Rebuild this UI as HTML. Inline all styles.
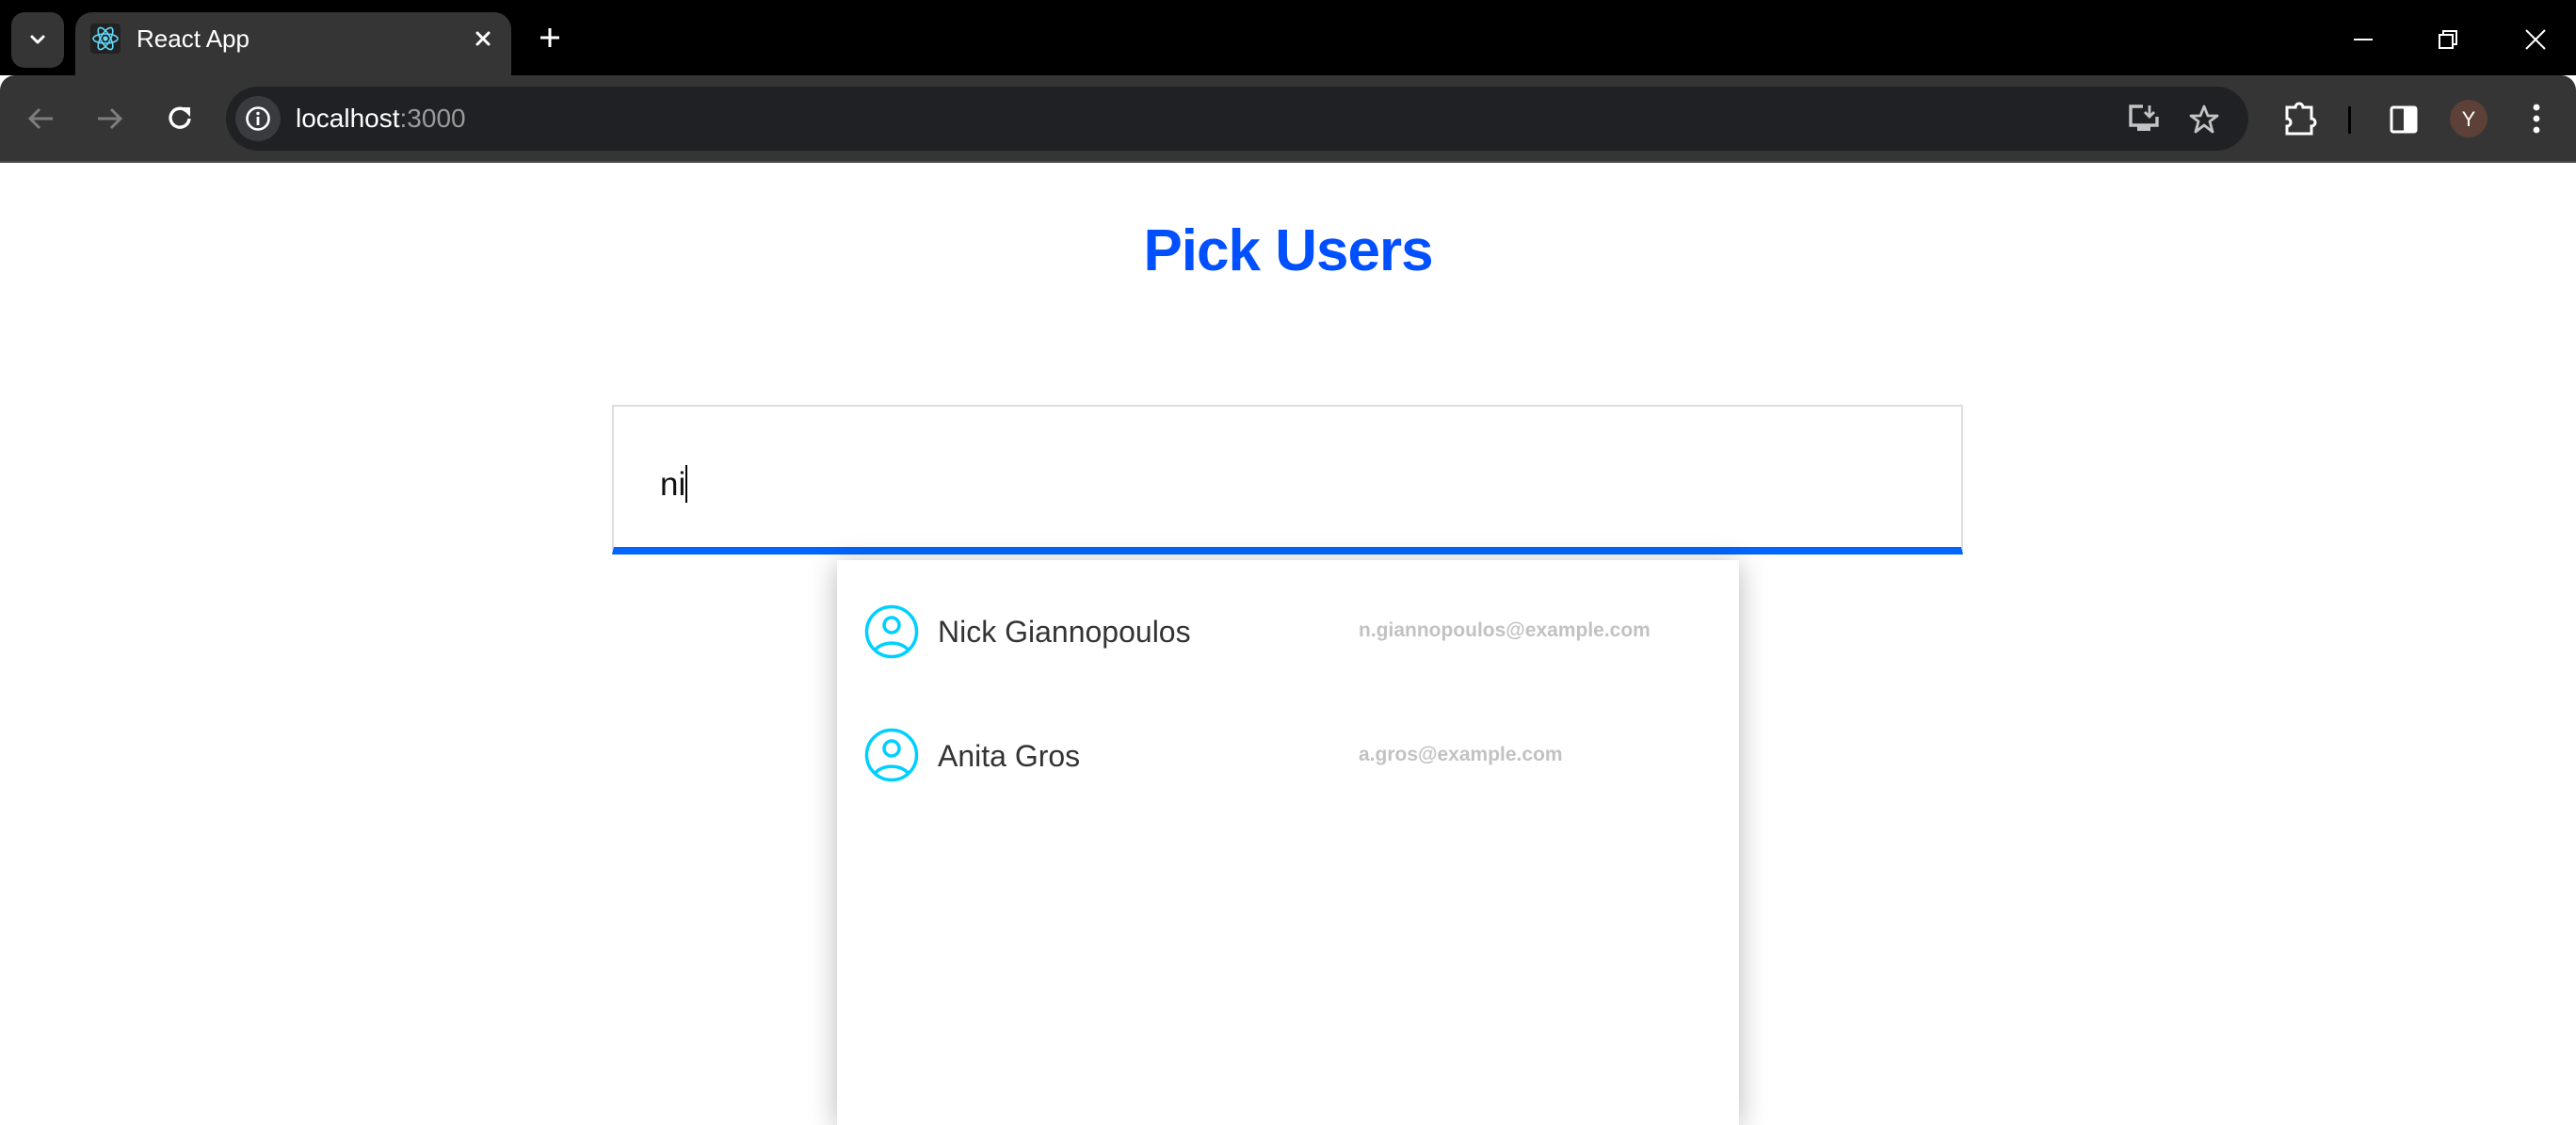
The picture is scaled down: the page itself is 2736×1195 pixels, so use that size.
<!DOCTYPE html>
<html><head><meta charset="utf-8"><style>
*{margin:0;padding:0;box-sizing:border-box}
html,body{width:2736px;height:1153px;overflow:hidden;background:#fff;font-family:"Liberation Sans",sans-serif}
.abs{position:absolute}
</style></head><body>
<!-- tab strip -->
<div class="abs" style="left:0;top:0;width:2736px;height:80px;background:#000"></div>
<div class="abs" style="left:12px;top:13px;width:56px;height:59px;background:#353535;border-radius:14px"></div>
<svg class="abs" style="left:28px;top:30px" width="24" height="24" viewBox="0 0 24 24"><path d="M6 9l6 6 6-6" stroke="#fff" stroke-width="3" fill="none" stroke-linecap="round" stroke-linejoin="round"/></svg>
<div class="abs" style="left:80px;top:13px;width:463px;height:80px;background:#353535;border-radius:18px 18px 0 0"></div>
<div class="abs" style="left:96px;top:25px;width:32px;height:32px;background:#222;border-radius:4px"></div>
<svg class="abs" style="left:96px;top:25px" width="32" height="32" viewBox="0 0 32 32"><g fill="none" stroke="#61dafb" stroke-width="1.6"><ellipse cx="16" cy="16" rx="13" ry="5"/><ellipse cx="16" cy="16" rx="13" ry="5" transform="rotate(60 16 16)"/><ellipse cx="16" cy="16" rx="13" ry="5" transform="rotate(120 16 16)"/></g><circle cx="16" cy="16" r="2.6" fill="#61dafb"/></svg>
<div class="abs" style="left:145px;top:25px;font-size:26px;color:#fff;line-height:32px">React App</div>
<svg class="abs" style="left:501px;top:29px" width="24" height="24" viewBox="0 0 24 24"><path d="M6 6l12 12M18 6L6 18" stroke="#fff" stroke-width="3" stroke-linecap="round"/></svg>
<svg class="abs" style="left:570px;top:26px" width="28" height="28" viewBox="0 0 28 28"><path d="M14 4v20M4 14h20" stroke="#fff" stroke-width="3"/></svg>
<svg class="abs" style="left:2490px;top:28px" width="240" height="28" viewBox="0 0 240 28"><path d="M10 14h20" stroke="#fff" stroke-width="2"/><rect x="101" y="9" width="14" height="14" fill="none" stroke="#fff" stroke-width="2"/><path d="M105 9V5h14v14h-4" fill="none" stroke="#fff" stroke-width="2"/><path d="M193 4l20 20M213 4l-20 20" stroke="#fff" stroke-width="2"/></svg>
<!-- toolbar -->
<div class="abs" style="left:0;top:80px;width:2736px;height:93px;background:#353535;border-radius:16px 16px 0 0"></div>
<div class="abs" style="left:0;top:171px;width:2736px;height:2px;background:#4d4d4d"></div>
<svg class="abs" style="left:26px;top:108px" width="200" height="36" viewBox="0 0 200 36"><path d="M30 18H6M16 8L6 18l10 10" stroke="#7d7d7d" stroke-width="3" fill="none"/><path d="M78 18h24M92 8l10 10-10 10" stroke="#7d7d7d" stroke-width="3" fill="none"/><path d="M172 10a10 10 0 1 0 3 8" stroke="#fff" stroke-width="3.4" fill="none"/><path d="M166 6h10v10z" fill="#fff"/></svg>
<div class="abs" style="left:240px;top:92px;width:2148px;height:68px;background:#202124;border-radius:34px"></div>
<div class="abs" style="left:250px;top:102px;width:48px;height:48px;background:#3a3b3e;border-radius:50%"></div>
<svg class="abs" style="left:260px;top:112px" width="28" height="28" viewBox="0 0 28 28"><circle cx="14" cy="14" r="11.5" fill="none" stroke="#fff" stroke-width="2.6"/><rect x="12.6" y="12" width="2.8" height="9" fill="#fff"/><circle cx="14" cy="8.5" r="1.7" fill="#fff"/></svg>
<div class="abs" style="left:314px;top:108px;font-size:28px;line-height:36px;color:#fff">localhost<span style="color:#9a9a9a">:3000</span></div>
<svg class="abs" style="left:2258px;top:108px" width="110" height="36" viewBox="0 0 110 36"><path d="M18 5H5v20h28v-9" fill="none" stroke="#c4c4c4" stroke-width="3.4"/><path d="M12 25v6h14v-6" fill="#c4c4c4"/><path d="M25 4v12M20 11l5 5 5-5" fill="none" stroke="#c4c4c4" stroke-width="2.8"/><path d="M83 5l4 10h10l-8 6 3 11-9-7-9 7 3-11-8-6h10z" fill="none" stroke="#c4c4c4" stroke-width="2.8" stroke-linejoin="round"/></svg>
<svg class="abs" style="left:2420px;top:106px" width="300" height="40" viewBox="0 0 300 40"><path d="M9 8h9a4 4 0 0 1 8 0h9v12a4 4 0 0 1 0 8v8H9v-8a4 4 0 0 0 0-8z" fill="none" stroke="#fff" stroke-width="3"/><rect x="74" y="7" width="3" height="29" fill="#000"/><rect x="120" y="8" width="26" height="26" rx="2" fill="none" stroke="#fff" stroke-width="3"/><rect x="133" y="8" width="13" height="26" fill="#fff"/><circle cx="202" cy="20" r="20" fill="#5d4037"/><text x="202" y="28" font-size="22" fill="#fff" text-anchor="middle" font-family="Liberation Sans">Y</text><circle cx="274" cy="8" r="3.4" fill="#fff"/><circle cx="274" cy="20" r="3.4" fill="#fff"/><circle cx="274" cy="32" r="3.4" fill="#fff"/></svg>
<!-- page -->
<div class="abs" style="left:0;top:222px;width:2736px;text-align:center;font-size:62px;font-weight:bold;color:#0050ff;line-height:90px;letter-spacing:-1px">Pick Users</div>
<div class="abs" style="left:650px;top:430px;width:1435px;height:159px;border:2px solid #ddd;border-bottom:8px solid #0066ff;background:#fff"></div>
<div class="abs" style="left:701px;top:494px;font-size:35px;line-height:40px;color:#111">ni<span style="display:inline-block;width:2px;height:40px;background:#000;vertical-align:-8px"></span></div>
<div class="abs" style="left:889px;top:595px;width:958px;height:600px;background:#fff;box-shadow:0 4px 28px rgba(0,0,0,0.28)"></div>
<svg class="abs" style="left:917px;top:641px" width="60" height="60" viewBox="0 0 60 60"><circle cx="30" cy="30" r="26.5" fill="none" stroke="#00d0ff" stroke-width="3.5"/><circle cx="30" cy="23" r="8" fill="none" stroke="#00d0ff" stroke-width="3.5"/><path d="M12 50a20 14 0 0 1 36 0" fill="none" stroke="#00d0ff" stroke-width="3.5"/></svg>
<div class="abs" style="left:996px;top:651px;font-size:32px;line-height:40px;color:#333">Nick Giannopoulos</div>
<div class="abs" style="left:1443px;top:656px;font-size:21px;font-weight:bold;line-height:28px;color:#c2c2c2">n.giannopoulos@example.com</div>
<svg class="abs" style="left:917px;top:772px" width="60" height="60" viewBox="0 0 60 60"><circle cx="30" cy="30" r="26.5" fill="none" stroke="#00d0ff" stroke-width="3.5"/><circle cx="30" cy="23" r="8" fill="none" stroke="#00d0ff" stroke-width="3.5"/><path d="M12 50a20 14 0 0 1 36 0" fill="none" stroke="#00d0ff" stroke-width="3.5"/></svg>
<div class="abs" style="left:996px;top:783px;font-size:32px;line-height:40px;color:#333">Anita Gros</div>
<div class="abs" style="left:1443px;top:788px;font-size:21px;font-weight:bold;line-height:28px;color:#c2c2c2">a.gros@example.com</div>
</body></html>
